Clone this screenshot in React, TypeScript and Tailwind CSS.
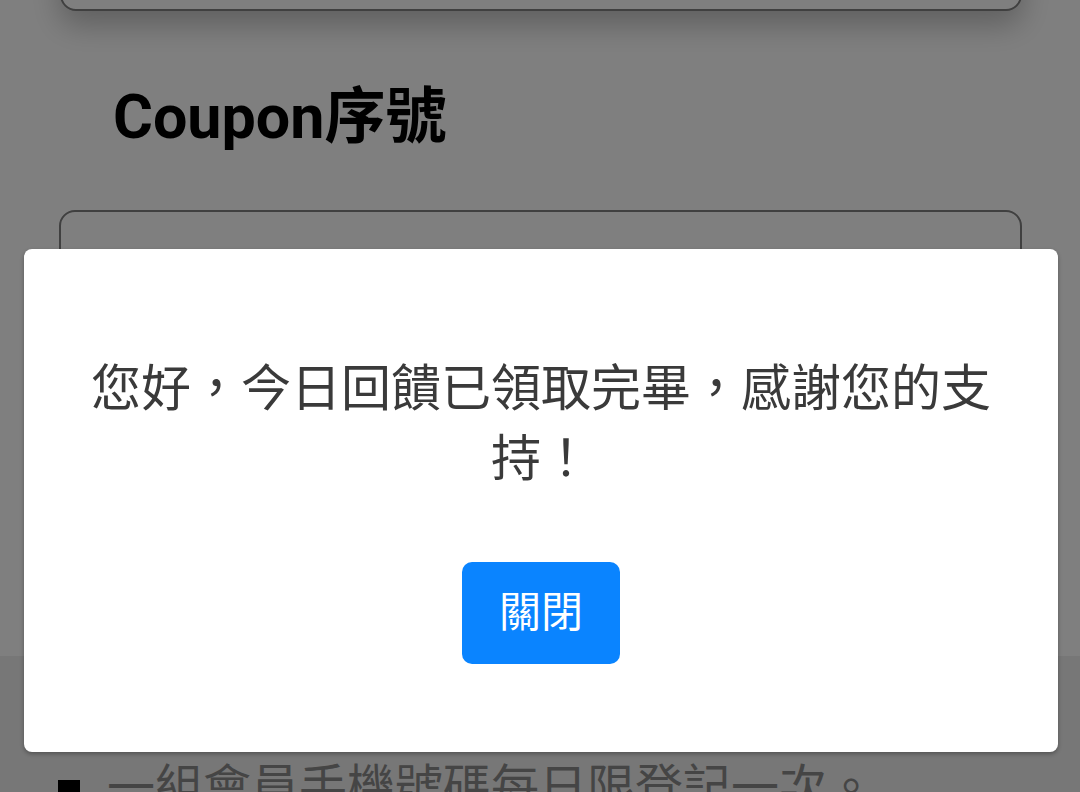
import React from 'react';

const cjk = "font-['Roboto','Noto_Sans_CJK_TC',sans-serif]";

const App: React.FC = () => {
  return (
    <div className={`relative w-[1080px] h-[792px] overflow-hidden bg-white ${cjk}`}>
      {/* page behind the dialog */}
      <div className="flex flex-col">
        <div className="ml-[60px] mr-[58px] mt-[-69px] h-[80px] rounded-[16px] border-2 border-[#808080] bg-white shadow-[0_14px_30px_rgba(0,0,0,0.25)]" />
        <h2 className="ml-[113px] mt-[70px] text-[61px] leading-[72px] font-bold text-black">Coupon序號</h2>
        <div className="ml-[59px] mr-[58px] mt-[57px] h-[110px] rounded-[16px] border-2 border-[#808080] bg-white" />
        <div className="mt-[336px] bg-[#eeeeee] pt-[96px] h-[200px]">
          <ul>
            <li className="flex items-start pl-[58px]">
              <span className="mt-[28px] w-[22px] h-[22px] bg-black shrink-0" />
              <span className="ml-[27px] text-[48px] leading-[72px] text-[#8a8a8a]">一組會員手機號碼每日限登記一次。</span>
            </li>
          </ul>
        </div>
      </div>

      {/* overlay */}
      <div className="absolute inset-0 bg-black/50" />

      {/* dialog */}
      <div className="absolute left-[24px] top-[249px] w-[1034px] h-[503px] rounded-[8px] bg-white shadow-[0_2px_4px_rgba(0,0,0,0.3)] px-[48px] pt-[105px] flex flex-col items-center">
        <p className="text-center text-[50px] leading-[70px] text-[#3a3a3a]">
          您好，今日回饋已領取完畢，感謝您的支持！
        </p>
        <button className="mt-[68px] w-[158px] h-[102px] rounded-[10px] bg-[#0a84ff] text-white text-[42px] leading-none">
          關閉
        </button>
      </div>
    </div>
  );
};

export default App;
